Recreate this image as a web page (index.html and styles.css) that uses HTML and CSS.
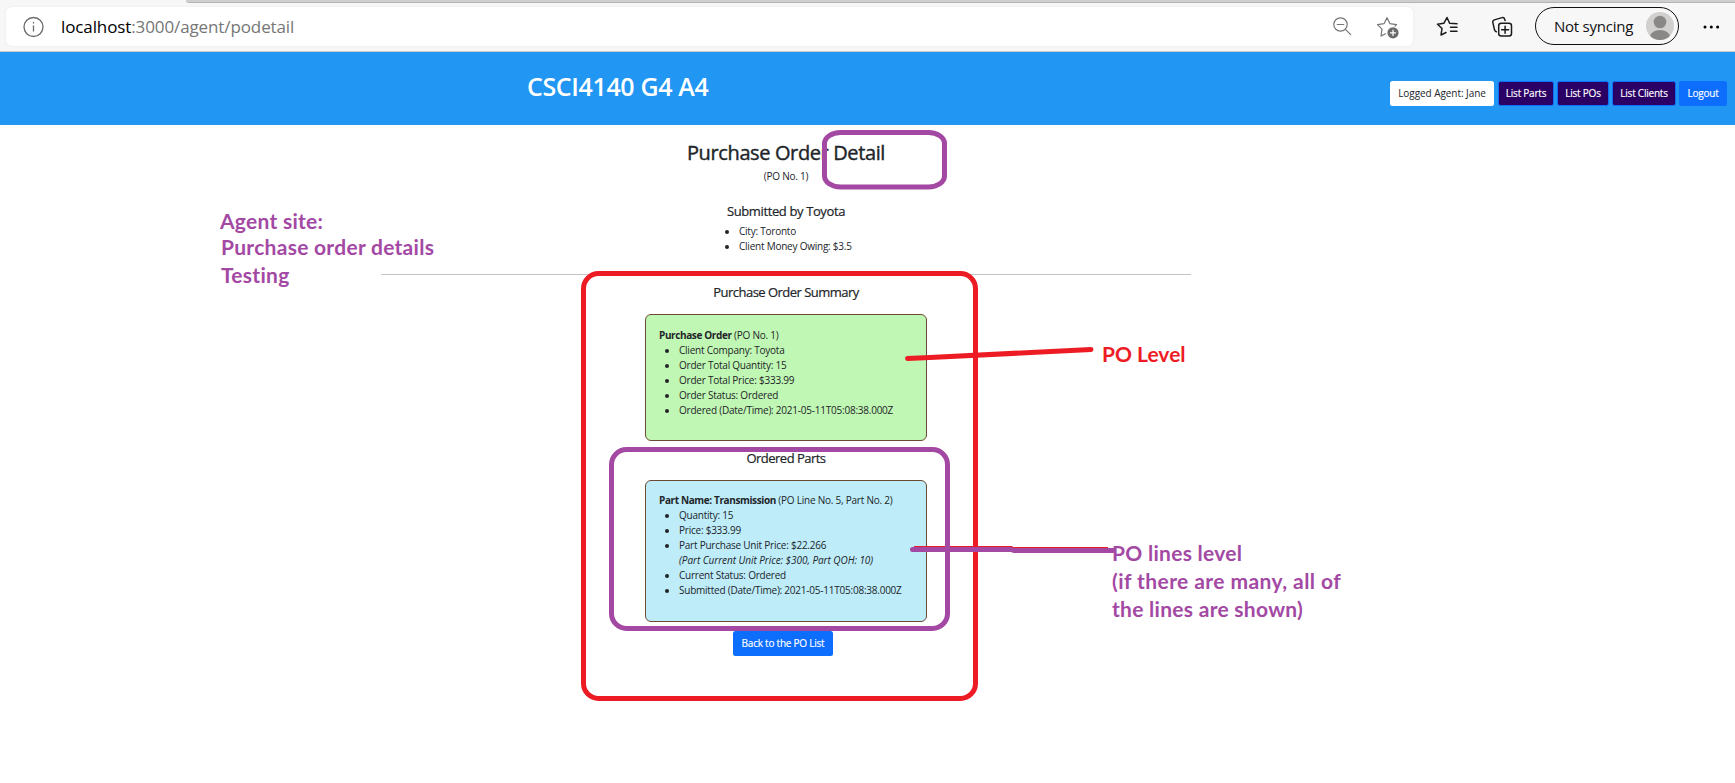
FILE: index.html
```html
<!DOCTYPE html>
<html lang="en">
<head>
<meta charset="utf-8">
<title>Purchase Order Detail</title>
<link rel="stylesheet" href="styles.css">
</head>
<body>
<div class="tabstrip"><div class="tabs"></div></div>
<div class="toolbar">
  <div class="address">
    <svg class="info" width="22" height="22" viewBox="0 0 22 22"><circle cx="11.500" cy="11" r="9.500"/><path d="M11.500 9.500v6M11.500 6v1.500"/></svg>
    <div class="url"><span class="host">localhost</span><span class="path">:3000/agent/podetail</span></div>
    <svg class="ico gray zoomout" width="22" height="22" viewBox="0 0 22 22"><circle cx="9.500" cy="8.500" r="6.700"/><path d="M6.200 8.500h6.600M14.400 13.400l5.300 5.300"/></svg>
    <svg class="ico gray favadd" width="24" height="24" viewBox="0 0 24 24"><path d="M9.500 18.800L5 21l1-6.800L1.500 9.700l6.500-1L11 2.700l3 6 6.500 1-1.500 1.500"/><circle class="fill" cx="17" cy="17.800" r="5.600"/><path class="plus" d="M14.400 17.800h5.200M17 15.200v5.200"/></svg>
  </div>
  <svg class="ico favs" width="24" height="24" viewBox="0 0 24 24"><path d="M11 18.500L6 21l1-6.500-4.500-4.300 6.300-.9L12 3.500l2.600 5.800 7.400.4M15.500 13.300H22M15.500 17.200H22"/></svg>
  <svg class="ico colls" width="24" height="24" viewBox="0 0 24 24"><rect x="6.700" y="9.300" width="12.800" height="12.800" rx="2.500"/><path d="M13.100 12.200v7M9.600 15.700h7M4.300 17.800a3 3 0 0 1-1.800-2L.8 8.300a2 2 0 0 1 1.500-2.400l7.800-2.300a2 2 0 0 1 2.500 1.400l.5 1.600"/></svg>
  <div class="profile"><span>Not syncing</span><svg width="28" height="28" viewBox="0 0 28 28"><defs><clipPath id="face"><circle cx="14" cy="14" r="14"/></clipPath></defs><g clip-path="url(#face)"><rect width="28" height="28" fill="#d2d0ce"/><circle cx="14" cy="10" r="6.300" fill="#8a8886"/><ellipse cx="14" cy="24.500" rx="10" ry="6.500" fill="#8a8886"/></g></svg></div>
  <svg class="more" width="18" height="6" viewBox="0 0 18 6"><circle cx="3" cy="3" r="1.500"/><circle cx="9.300" cy="3" r="1.500"/><circle cx="15.600" cy="3" r="1.500"/></svg>
</div>
<header class="site">
  <h1>CSCI4140 G4 A4</h1>
  <nav>
    <span class="btn agent">Logged Agent: Jane</span>
    <a class="btn dark parts">List Parts</a>
    <a class="btn dark pos">List POs</a>
    <a class="btn dark clients">List Clients</a>
    <a class="btn logout">Logout</a>
  </nav>
</header>
<main>
  <h2>Purchase Order Detail</h2>
  <p class="sub">(PO No. 1)</p>
  <h3 class="by">Submitted by Toyota</h3>
  <ul class="client"><li>City: Toronto</li><li>Client Money Owing: $3.5</li></ul>
  <hr>
  <h3 class="sum">Purchase Order Summary</h3>
  <section class="card green">
    <p><b>Purchase Order</b> (PO No. 1)</p>
    <ul><li>Client Company: Toyota</li><li>Order Total Quantity: 15</li><li>Order Total Price: $333.99</li><li>Order Status: Ordered</li><li>Ordered (Date/Time): 2021-05-11T05:08:38.000Z</li></ul>
  </section>
  <h3 class="ordered">Ordered Parts</h3>
  <section class="card blue">
    <p><b>Part Name: Transmission</b> (PO Line No. 5, Part No. 2)</p>
    <ul><li>Quantity: 15</li><li>Price: $333.99</li><li>Part Purchase Unit Price: $22.266<br><i>(Part Current Unit Price: $300, Part QOH: 10)</i></li><li>Current Status: Ordered</li><li>Submitted (Date/Time): 2021-05-11T05:08:38.000Z</li></ul>
  </section>
  <a class="btn back">Back to the PO List</a>
</main>
<svg class="marks" width="1735" height="783" viewBox="0 0 1735 783">
  <rect class="red" x="583.500" y="273.500" width="392" height="425" rx="15"/>
  <path class="red" d="M907.500 358.500L930 357.500L1091 349.500"/>
  <path class="red flat" d="M914 548.500H1011L1012 549.500H1108"/>
  <rect class="purple" x="824.500" y="132.500" width="120" height="54.500" rx="16" ry="11"/>
  <rect class="purple" x="611.500" y="449.500" width="336" height="179" rx="15"/>
  <path class="purple" d="M912.500 549.500H1011L1014 550.500H1113"/>
</svg>
<div class="note n1">Agent site:</div>
<div class="note n2">Purchase order details</div>
<div class="note n3">Testing</div>
<div class="note n4">PO Level</div>
<div class="note n5">PO lines level</div>
<div class="note n6">(if there are many, all of</div>
<div class="note n7">the lines are shown)</div>
</body>
</html>
```
FILE: styles.css
```css
* { box-sizing: border-box; }
body { margin: 0; height: 783px; position: relative; overflow: hidden; background: #fff; color: #212529; font: 10px/15px "Open Sans", "Noto Sans", sans-serif; letter-spacing: -.23px; }
h1, h2, h3, p, ul { margin: 0; padding: 0; font-weight: 400; }
svg { overflow: visible; }
.tabstrip { height: 3px; background: #f7f7f7; }
.tabs { height: 3px; margin-left: 186px; background: #cecece; border-bottom: 1px solid #b5b5b5; border-bottom-left-radius: 4px; }
.toolbar { height: 49px; padding: 4px 0 0 6px; display: flex; align-items: flex-start; background: #f7f7f7; border-bottom: 1px solid #cdcdcd; }
.address { width: 1407px; height: 39px; padding-left: 16px; display: flex; align-items: center; background: #fff; border-radius: 6px; box-shadow: 0 0 3px #e8e8e8; }
.info { fill: none; stroke: #6b6b6b; stroke-width: 1.3; }
.url { margin-left: 17px; flex: 1; font-size: 17px; line-height: 24px; color: #767676; white-space: nowrap; letter-spacing: -.11px; }
.host { color: #000; }
.ico { fill: none; stroke: #1b1b1b; stroke-width: 1.5; stroke-linejoin: round; stroke-linecap: round; flex: none; }
.gray { stroke: #767676; stroke-width: 1.2; }
.gray .fill { fill: #6b6b6b; stroke: none; }
.gray .plus { stroke: #fff; }
.favadd { margin: 0 13px 0 23px; }
.favs { margin: 7px 0 0 22px; }
.colls { margin: 7px 0 0 33px; }
.profile { width: 144px; height: 38px; margin-left: 19px; padding: 0 4px 0 18px; display: flex; align-items: center; justify-content: space-between; border: 1.5px solid #111; border-radius: 19px; font-size: 15px; letter-spacing: -.24px; color: #111; }
.more { margin: 17px 0 0 23px; }
.site { height: 73px; padding-left: 527px; padding-right: 8px; display: flex; justify-content: space-between; background: #2196f3; }
h1 { font-size: 25px; line-height: 34px; font-weight: 600; color: #fff; margin-top: 17px; white-space: nowrap; letter-spacing: -.37px; }
nav { display: flex; gap: 3px; padding-top: 29px; }
.btn { height: 25px; display: flex; align-items: center; justify-content: center; border-radius: 2.5px; background: #0d6efd; color: #fff; white-space: nowrap; -webkit-text-stroke: .15px; }
.agent { width: 104px; margin-right: 1px; background: #fff; color: #212529; letter-spacing: -.06px; -webkit-text-stroke: 0; }
.dark { background: #2a0065; border: 1px solid #0d6efd; }
.parts { width: 56px; }
.pos { width: 52px; }
.clients { width: 64px; }
.logout { width: 48px; }
main { width: 810px; margin-left: 381px; display: flex; flex-direction: column; align-items: center; white-space: nowrap; }
h2 { font-size: 20px; line-height: 26px; margin-top: 15px; letter-spacing: -.38px; -webkit-text-stroke: .4px; }
.sub { margin-top: 3px; }
h3 { font-size: 13px; line-height: 16px; letter-spacing: -.52px; -webkit-text-stroke: .2px; }
.by { margin-top: 19px; letter-spacing: -.38px; }
.client { width: 113px; margin: 5px 0 0 19px; }
hr { width: 810px; height: 1px; border: 0; margin: 20px 0 0; background: #c4c4c4; }
.sum { margin-top: 9px; }
.card { width: 282px; border: 1px solid #6b4a33; border-radius: 6px; padding: 13px; }
.card ul { padding-left: 20px; }
.card b { font-weight: 700; letter-spacing: -.38px; }
.card i { letter-spacing: -.05px; }
.green { height: 127px; margin-top: 14px; background: #c1f7b4; }
.ordered { margin-top: 9px; }
.blue { height: 142px; margin-top: 14px; padding-top: 12px; background: #beecf9; }
.back { width: 100px; margin: 9px 6px 0 0; }
.marks { position: absolute; left: 0; top: 0; fill: none; stroke-width: 5; stroke-linecap: round; }
.red { stroke: #ed1c24; }
.purple { stroke: #a349a4; }
.flat { stroke-linecap: butt; }
.note { position: absolute; font: 700 21px/28px Lato, sans-serif; letter-spacing: .28px; color: #a349a4; white-space: nowrap; }
.n1 { left: 220px; top: 207px; }
.n2 { left: 221px; top: 233px; }
.n3 { left: 221px; top: 261px; }
.n4 { left: 1102px; top: 340px; color: #ed1c24; letter-spacing: 0; }
.n5 { left: 1112px; top: 539px; }
.n6 { left: 1112px; top: 567px; letter-spacing: .42px; }
.n7 { left: 1112px; top: 595px; }
```
